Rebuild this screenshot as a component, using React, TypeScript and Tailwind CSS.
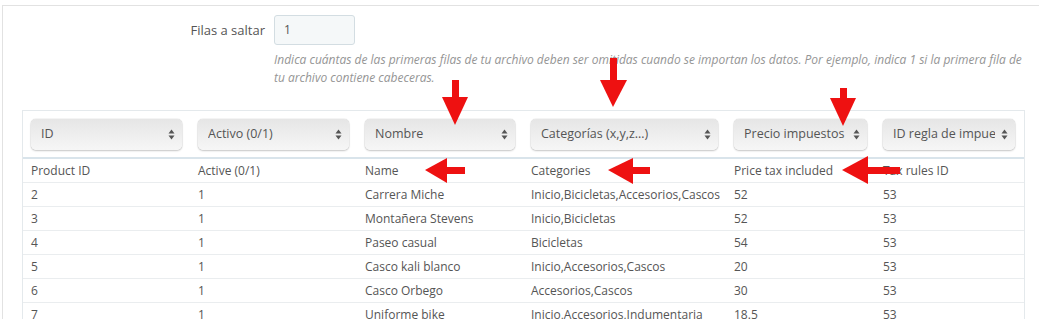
import React from 'react';

const headers = [
  { select: 'ID', label: 'Product ID', w: 'w-[167px]' },
  { select: 'Activo (0/1)', label: 'Active (0/1)', w: 'w-[167px]' },
  { select: 'Nombre', label: 'Name', w: 'w-[166px]' },
  { select: 'Categorías (x,y,z…)', label: 'Categories', w: 'w-[203px]' },
  { select: 'Precio impuestos (inc.)', label: 'Price tax included', w: 'w-[149px]' },
  { select: 'ID regla de impuestos', label: 'Tax rules ID', w: 'w-[148px]' },
];

const rows = [
  ['2', '1', 'Carrera Miche', 'Inicio,Bicicletas,Accesorios,Cascos', '52', '53'],
  ['3', '1', 'Montañera Stevens', 'Inicio,Bicicletas', '52', '53'],
  ['4', '1', 'Paseo casual', 'Bicicletas', '54', '53'],
  ['5', '1', 'Casco kali blanco', 'Inicio,Accesorios,Cascos', '20', '53'],
  ['6', '1', 'Casco Orbego', 'Accesorios,Cascos', '30', '53'],
  ['7', '1', 'Uniforme bike', 'Inicio,Accesorios,Indumentaria', '18.5', '53'],
];

function FakeSelect({ value }: { value: string }) {
  return (
    <div className="flex h-[31px] items-center rounded-[5px] bg-gradient-to-b from-[#e6e6e6] to-[#f6f6f6] pl-[10px] pr-[7px] shadow-[0_0_1px_rgba(0,0,0,0.35),0_1px_2px_rgba(0,0,0,0.2)]">
      <span className="min-w-0 flex-1 overflow-hidden whitespace-nowrap text-[12.5px] text-[#555]">{value}</span>
      <svg width="7" height="11" viewBox="0 0 7 11" className="ml-[6px] shrink-0">
        <polygon points="3.5,0.5 6.5,4.5 0.5,4.5" fill="#555" />
        <polygon points="0.5,6.5 6.5,6.5 3.5,10.5" fill="#555" />
      </svg>
    </div>
  );
}

export default function App() {
  return (
    <div className="relative h-[319px] w-[1039px] overflow-hidden bg-white font-['Open_Sans',sans-serif] text-[13px] text-[#555]">
      <div className="ml-[2px] mt-[5px] h-full border-l border-t border-[#e2e2e2]">
        <div className="flex pt-[9px]">
          <label className="w-[271px] pr-[9px] text-right leading-[30px]">Filas a saltar</label>
          <div>
            <div className="flex h-[30px] w-[81px] items-center rounded-[3px] border border-[#d3dde2] bg-[#f5f8f9] px-[9px] text-[12px]">
              1
            </div>
            <p className="mt-[6px] w-[756px] text-[12px] italic leading-[18px] text-[#959595]">
              Indica cuántas de las primeras filas de tu archivo deben ser omitidas cuando se importan los datos. Por
              ejemplo, indica 1 si la primera fila de tu archivo contiene cabeceras.
            </p>
          </div>
        </div>

        <div className="ml-[19px] mt-[23px] w-[1003px] border border-[#e4e9ec] text-[12px]">
          <div className="flex border-b-2 border-[#d9e4eb] pb-[7px] pt-[8px]">
            {headers.map((h) => (
              <div key={h.select} className={`${h.w} px-[8px]`}>
                <FakeSelect value={h.select} />
              </div>
            ))}
          </div>
          <div className="flex h-[23px] items-center">
            {headers.map((h) => (
              <div key={h.label} className={`${h.w} whitespace-nowrap px-[8px]`}>
                {h.label}
              </div>
            ))}
          </div>
          {rows.map((r) => (
            <div key={r[0]} className="flex h-[24px] items-center border-t border-[#eaedef]">
              {r.map((c, i) => (
                <div key={i} className={`${headers[i].w} whitespace-nowrap px-[8px]`}>
                  {c}
                </div>
              ))}
            </div>
          ))}
        </div>
      </div>

      {/* red annotation arrows drawn over the screenshot */}
      <svg className="pointer-events-none absolute left-0 top-0" width="1039" height="319">
        <g fill="#ee1111">
          <rect x="452" y="80" width="7" height="19" />
          <polygon points="442,97 468,97 455,125" />
          <rect x="610" y="58" width="7" height="24" />
          <polygon points="600,80 627,80 613,107" />
          <rect x="840" y="88" width="7" height="12" />
          <polygon points="830,98 856,98 843,126" />
          <rect x="446" y="167" width="19" height="7" />
          <polygon points="425,170 447,158 447,183" />
          <rect x="630" y="167" width="20" height="7" />
          <polygon points="608,170 633,158 633,184" />
          <rect x="866" y="167" width="34" height="7" />
          <polygon points="842,170 868,156 868,184" />
        </g>
      </svg>
    </div>
  );
}
